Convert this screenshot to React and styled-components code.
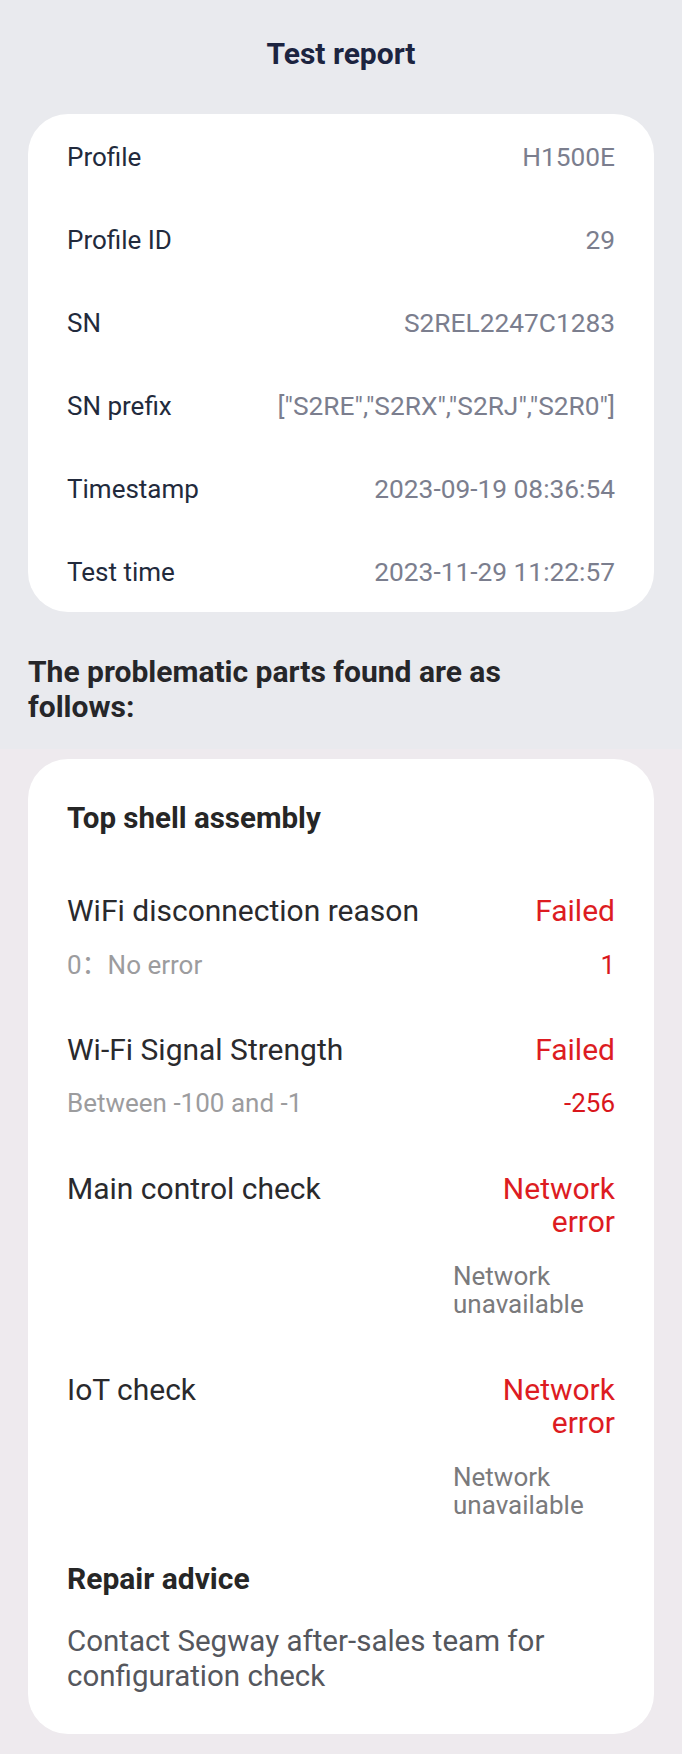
import React from 'react'
import styled, { createGlobalStyle } from 'styled-components'

const GlobalStyle = createGlobalStyle`
    html, body {
        margin: 0;
        padding: 0;
        background: #eeeaee;
    }
    body {
        font-family: Roboto, "Noto Sans CJK SC", sans-serif;
    }
    * {
        box-sizing: border-box;
    }
`

const Page = styled.div`
    display: flex;
    flex-direction: column;
    width: 682px;
    min-height: 1754px;
`
const TopSection = styled.section`
    display: flex;
    flex-direction: column;
    background: #e9eaee;
    padding: 36px 28px 25px;
`
const Title = styled.h1`
    margin: 0;
    text-align: center;
    font-size: 30px;
    line-height: 36px;
    font-weight: 700;
    color: #1c2440;
`
const InfoCard = styled.div`
    display: flex;
    flex-direction: column;
    gap: 53px;
    margin-top: 42px;
    padding: 28px 39px 25px;
    background: #ffffff;
    border-radius: 40px;
`
const InfoRow = styled.div`
    display: flex;
    justify-content: space-between;
    align-items: center;
    line-height: 30px;
`
const InfoLabel = styled.span`
    font-size: 26px;
    color: #222a3c;
`
const InfoValue = styled.span`
    font-size: 26.3px;
    color: #7b7e8e;
    text-align: right;
`
const ProblemsHeading = styled.h2`
    margin: 42px 0 0;
    max-width: 520px;
    font-size: 30px;
    line-height: 35px;
    font-weight: 700;
    color: #262629;
`
const BottomSection = styled.section`
    flex: 1;
    display: flex;
    flex-direction: column;
    padding: 10px 28px 20px;
`
const PartCard = styled.div`
    display: flex;
    flex-direction: column;
    padding: 43px 39px 40px;
    background: #ffffff;
    border-radius: 40px;
`
const PartTitle = styled.h3`
    margin: 0 0 60px;
    font-size: 29.5px;
    line-height: 32px;
    font-weight: 700;
    color: #262626;
`
const CheckList = styled.div`
    display: flex;
    flex-direction: column;
    gap: 53.5px;
`
const CheckItem = styled.div`
    display: flex;
    flex-direction: column;
    gap: 23.2px;
`
const CheckRow = styled.div`
    display: flex;
    justify-content: space-between;
    align-items: flex-start;
    gap: 20px;
    font-size: 30px;
    line-height: 33.4px;
`
const CheckName = styled.span`
    flex: 1;
    color: #2a2a2d;
`
const CheckResult = styled.span`
    max-width: 165px;
    text-align: right;
    color: #dd1c22;
`
const DetailRow = styled.div`
    display: flex;
    justify-content: space-between;
    align-items: flex-start;
    gap: 20px;
    font-size: 26px;
    line-height: 28.7px;
`
const DetailRange = styled.span`
    color: #9c9c9e;
`
const DetailValue = styled.span`
    margin-left: auto;
    max-width: 162px;
    text-align: ${p => (p.$tone === 'note' ? 'left' : 'right')};
    color: ${p => (p.$tone === 'note' ? '#7a7a7c' : '#d9161c')};
`
const AdviceTitle = styled.h4`
    margin: 43px 0 0;
    font-size: 30px;
    line-height: 32px;
    font-weight: 700;
    color: #262626;
`
const AdviceText = styled.p`
    margin: 29px 0 0;
    font-size: 29.5px;
    line-height: 35px;
    color: #55575d;
`

const info = [
  ['Profile', 'H1500E'],
  ['Profile ID', '29'],
  ['SN', 'S2REL2247C1283'],
  ['SN prefix', '["S2RE","S2RX","S2RJ","S2R0"]'],
  ['Timestamp', '2023-09-19 08:36:54'],
  ['Test time', '2023-11-29 11:22:57'],
]

const checks = [
  { name: 'WiFi disconnection reason', result: 'Failed', range: '0：No error', value: '1' },
  { name: 'Wi-Fi Signal Strength', result: 'Failed', range: 'Between -100 and -1', value: '-256' },
  { name: 'Main control check', result: 'Network error', note: 'Network unavailable' },
  { name: 'IoT check', result: 'Network error', note: 'Network unavailable' },
]

const App = () => {
  return (
    <Page>
      <GlobalStyle />
      <TopSection>
        <Title>Test report</Title>
        <InfoCard>
          {info.map(([label, value]) => (
            <InfoRow key={label}>
              <InfoLabel>{label}</InfoLabel>
              <InfoValue>{value}</InfoValue>
            </InfoRow>
          ))}
        </InfoCard>
        <ProblemsHeading>The problematic parts found are as follows:</ProblemsHeading>
      </TopSection>
      <BottomSection>
        <PartCard>
          <PartTitle>Top shell assembly</PartTitle>
          <CheckList>
            {checks.map(c => (
              <CheckItem key={c.name}>
                <CheckRow>
                  <CheckName>{c.name}</CheckName>
                  <CheckResult>{c.result}</CheckResult>
                </CheckRow>
                <DetailRow>
                  {c.range && <DetailRange>{c.range}</DetailRange>}
                  {c.note
                    ? <DetailValue $tone="note">{c.note}</DetailValue>
                    : <DetailValue>{c.value}</DetailValue>}
                </DetailRow>
              </CheckItem>
            ))}
          </CheckList>
          <AdviceTitle>Repair advice</AdviceTitle>
          <AdviceText>Contact Segway after-sales team for configuration check</AdviceText>
        </PartCard>
      </BottomSection>
    </Page>
  )
}

export default App
